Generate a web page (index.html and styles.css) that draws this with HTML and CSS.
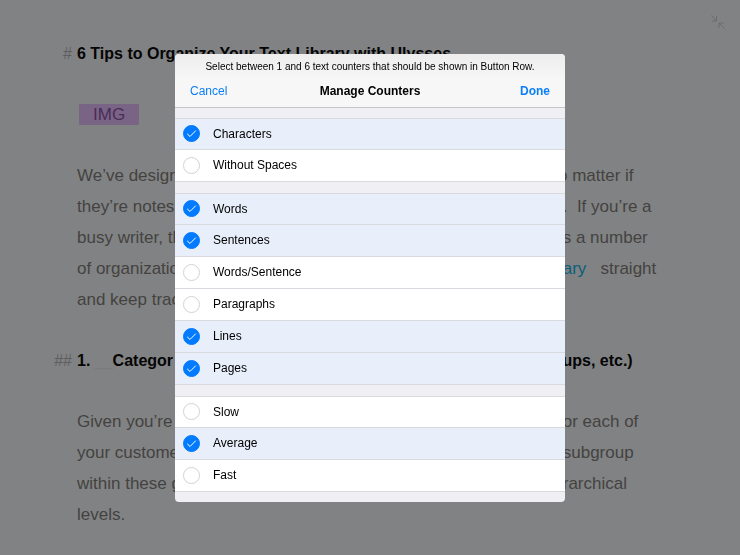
FILE: index.html
```html
<!DOCTYPE html>
<html lang="en">

<head>
    <meta charset="UTF-8">
    <meta name="viewport" content="width=device-width, initial-scale=1.0">
    <title>Manage Counters</title>
    <link rel="stylesheet" href="styles.css">
</head>

<body>
    <button class="collapse" type="button" aria-label="Exit full screen">
        <svg width="14" height="14" viewBox="0 0 14 14">
            <path d="M.5 .5L5.5 6M5.5 1V6H1M13.5 13.5L8 8M12.5 8H8V13" />
        </svg>
    </button>

    <main class="editor">
        <h1 class="line"><span class="mark">#</span><span class="full">6 Tips to Organize Your Text Library with Ulysses</span></h1>

        <div class="line"><span class="start"><span class="img-tag">IMG</span></span></div>

        <div class="text">
            <div class="line"><span class="start">We’ve design</span><span class="end">o matter if</span></div>
            <div class="line"><span class="start">they’re notes</span><span class="end">&nbsp;.&nbsp; If you’re a</span></div>
            <div class="line"><span class="start">busy writer, th</span><span class="end">&nbsp;s a number</span></div>
            <div class="line"><span class="start">of organizatio</span><span class="end"><a href="#">&nbsp;ary</a>&nbsp;&nbsp; straight</span></div>
            <div class="line"><span class="start">and keep trac</span></div>
        </div>

        <h2 class="line"><span class="mark">##</span><span class="start">1. <span class="tab">__</span>Categor</span><span class="end">&nbsp;ups, etc.)</span></h2>

        <div class="text">
            <div class="line"><span class="start">Given you’re a</span><span class="end">for each of</span></div>
            <div class="line"><span class="start">your custome</span><span class="end">&nbsp;subgroup</span></div>
            <div class="line"><span class="start">within these g</span><span class="end">&nbsp;rarchical</span></div>
            <div class="line"><span class="start">levels.</span></div>
        </div>
    </main>

    <div class="overlay">
        <form class="dialog" role="dialog" aria-labelledby="dialog-title">
            <header class="dialog-header">
                <p class="hint">Select between 1 and 6 text counters that should be shown in Button Row.</p>
                <div class="bar">
                    <button class="cancel" type="button">Cancel</button>
                    <h3 id="dialog-title">Manage Counters</h3>
                    <button class="done" type="button">Done</button>
                </div>
            </header>

            <div class="groups">
                <div class="group">
                    <label class="row"><input type="checkbox" checked>Characters</label>
                    <label class="row"><input type="checkbox">Without Spaces</label>
                </div>
                <div class="group">
                    <label class="row"><input type="checkbox" checked>Words</label>
                    <label class="row"><input type="checkbox" checked>Sentences</label>
                    <label class="row"><input type="checkbox">Words/Sentence</label>
                    <label class="row"><input type="checkbox">Paragraphs</label>
                    <label class="row"><input type="checkbox" checked>Lines</label>
                    <label class="row"><input type="checkbox" checked>Pages</label>
                </div>
                <div class="group">
                    <label class="row"><input type="checkbox">Slow</label>
                    <label class="row"><input type="checkbox" checked>Average</label>
                    <label class="row"><input type="checkbox">Fast</label>
                </div>
            </div>
        </form>
    </div>
</body>

</html>
```
FILE: styles.css
```css
* {
    margin: 0;
    padding: 0;
    box-sizing: border-box;
}

body {
    min-height: 100vh;
    background: #818284;
    color: #444240;
    font-family: "Liberation Sans", Arial, sans-serif;
    font-size: 17px;
}

button {
    border: none;
    background: none;
    font: inherit;
    cursor: pointer;
}

.collapse {
    position: absolute;
    top: 15px;
    right: 15px;
    line-height: 0;
}

.collapse path {
    fill: none;
    stroke: #6b6c6e;
}

/* editor ------------------------------------------- */

.editor {
    display: flex;
    flex-direction: column;
    gap: 30px;
    max-width: 632px;
    margin: 0 auto;
    padding-top: 38px;
}

/* hanging mark | text | end of the line */
.line {
    display: grid;
    grid-template-columns: 23px 1fr 128px;
    line-height: 31px;
    white-space: nowrap;
}

h1,
h2 {
    color: #050505;
    font-size: 16px;
}

.mark {
    grid-column: 1;
    justify-self: end;
    padding-right: 5px;
    color: #5f5e5e;
    font-weight: normal;
}

.start {
    grid-column: 2;
}

.full {
    grid-column: 2 / 4;
}

.end {
    grid-column: 3;
}

.end a {
    color: #0b5f78;
    text-decoration: none;
}

.tab {
    color: #7a7b7d;
    font-weight: normal;
}

.img-tag {
    display: inline-block;
    margin-left: 2px;
    padding: 0 14px;
    border-radius: 1px;
    background: #7a6486;
    color: #4a2c58;
    line-height: 21px;
}

/* dialog ------------------------------------------- */

.overlay {
    position: fixed;
    inset: 0;
    display: flex;
    align-items: center;
    justify-content: center;
}

.dialog {
    width: 100%;
    max-width: 390px;
    border-radius: 4px;
    overflow: hidden;
    background: #efeff4;
    color: #000;
    font-size: 12px;
}

.dialog-header {
    padding-top: 5px;
    border-bottom: 1px solid #c6c6ca;
    background: linear-gradient(#ededee, #f7f7f8 50%);
}

.hint {
    font-size: 10px;
    line-height: 16px;
    text-align: center;
}

.bar {
    display: grid;
    grid-template-columns: 1fr auto 1fr;
    align-items: center;
    height: 32px;
    padding: 0 15px;
}

.bar h3 {
    font-size: 12px;
}

.cancel,
.done {
    color: #0b7ff5;
}

.cancel {
    justify-self: start;
}

.done {
    justify-self: end;
    font-weight: bold;
}

.groups {
    display: flex;
    flex-direction: column;
    gap: 11px;
    padding: 10px 0;
}

.group {
    border-top: 1px solid #d9dae0;
}

.row {
    display: flex;
    align-items: center;
    gap: 13px;
    height: 32px;
    padding-left: 8px;
    border-bottom: 1px solid #d9dae0;
    background: #fff;
}

.row:first-child {
    height: 31px;
}

.row:has(:checked) {
    background: #e8effa;
}

.row input {
    appearance: none;
    width: 17px;
    height: 17px;
    border: 1px solid #d2d2d6;
    border-radius: 50%;
    background: #fff;
}

.row input:checked {
    border-color: #007aff;
    background: #007aff url("data:image/svg+xml,%3Csvg xmlns='http://www.w3.org/2000/svg' viewBox='0 0 15 15'%3E%3Cpath d='M3.2 7.8L6 10.5L11.8 4.6' fill='none' stroke='white'/%3E%3C/svg%3E") center / 15px no-repeat;
}
```
